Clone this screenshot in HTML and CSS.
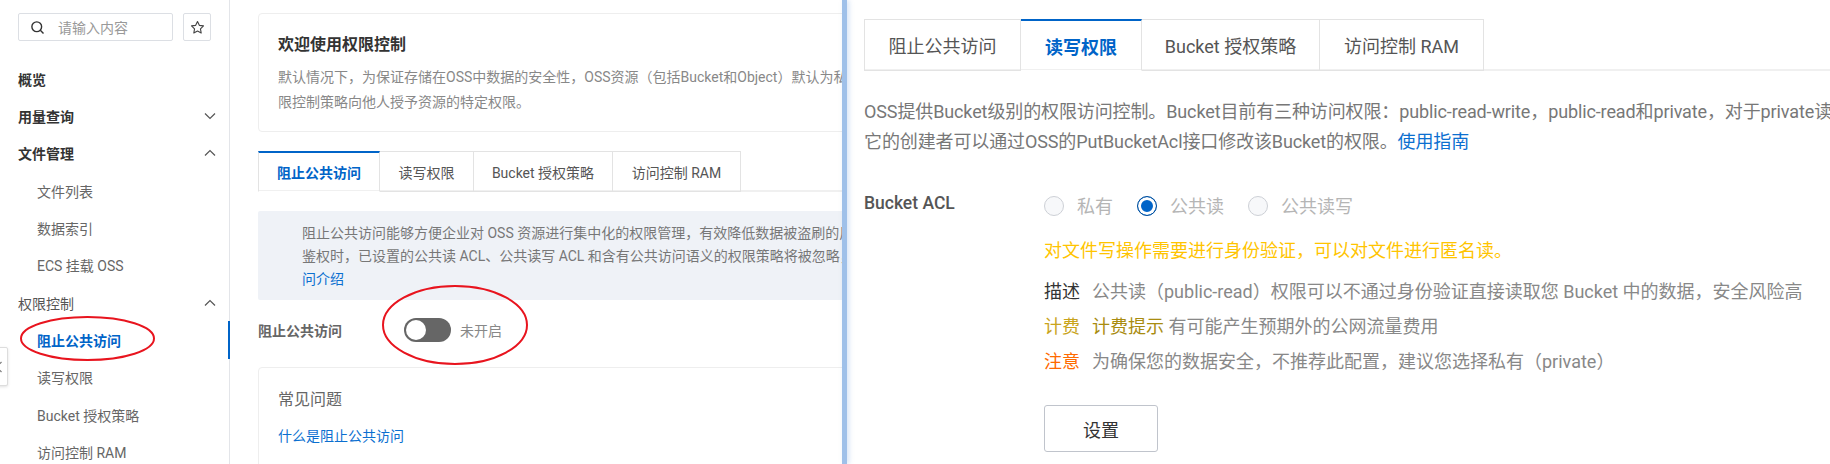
FILE: index.html
```html
<!DOCTYPE html>
<html lang="zh">
<head>
<meta charset="utf-8">
<title>权限控制</title>
<link rel="stylesheet" href="styles.css">
</head>
<body>
<div class="app">
  <section class="left">
    <aside class="sidebar">
      <div class="search-row">
        <div class="search">
          <svg class="search-icon" viewBox="0 0 16 16" width="15" height="15"><circle cx="7.2" cy="7.2" r="5.2"/><path d="M11 11l3.4 3.4"/></svg>
          <span>请输入内容</span>
        </div>
        <div class="star">
          <svg viewBox="0 0 16 16" width="15" height="15"><path d="M8 1.6l1.95 4.1 4.45.6-3.25 3.1.8 4.45L8 11.7l-3.95 2.15.8-4.45L1.6 6.3l4.45-.6z"/></svg>
        </div>
      </div>
      <nav class="menu">
        <div class="item head">概览</div>
        <div class="item head">用量查询<svg class="chev" viewBox="0 0 12 8" width="12" height="8"><path d="M1 1.5l5 5 5-5"/></svg></div>
        <div class="item head">文件管理<svg class="chev" viewBox="0 0 12 8" width="12" height="8"><path d="M1 6.5l5-5 5 5"/></svg></div>
        <div class="item sub">文件列表</div>
        <div class="item sub">数据索引</div>
        <div class="item sub">ECS 挂载 OSS</div>
        <div class="item group">权限控制<svg class="chev" viewBox="0 0 12 8" width="12" height="8"><path d="M1 6.5l5-5 5 5"/></svg></div>
        <div class="item sub active">阻止公共访问</div>
        <div class="item sub">读写权限</div>
        <div class="item sub">Bucket 授权策略</div>
        <div class="item sub">访问控制 RAM</div>
      </nav>
      <div class="collapse"><svg viewBox="0 0 8 12" width="8" height="12"><path d="M6.5 1l-5 5 5 5"/></svg></div>
    </aside>
    <main class="main">
      <div class="card intro">
        <h2>欢迎使用权限控制</h2>
        <p>默认情况下，为保证存储在OSS中数据的安全性，OSS资源（包括Bucket和Object）默认为私有权限，只有资源拥有者或者被授权的用户</p>
        <p>限控制策略向他人授予资源的特定权限。</p>
      </div>
      <div class="tabs small">
        <div class="tab active tab-a">阻止公共访问</div>
        <div class="tab tab-b">读写权限</div>
        <div class="tab tab-c">Bucket 授权策略</div>
        <div class="tab tab-d">访问控制 RAM</div>
      </div>
      <div class="notice">
        <p>阻止公共访问能够方便企业对 OSS 资源进行集中化的权限管理，有效降低数据被盗刷的风险和可能产生的</p>
        <p>鉴权时，已设置的公共读 ACL、公共读写 ACL 和含有公共访问语义的权限策略将被忽略，仅保留</p>
        <p class="link">问介绍</p>
      </div>
      <div class="switch-row">
        <div class="switch-label">阻止公共访问</div>
        <div class="switch"><span class="knob"></span></div>
        <div class="switch-text">未开启</div>
      </div>
      <div class="card faq">
        <h3>常见问题</h3>
        <p class="link">什么是阻止公共访问</p>
      </div>
    </main>
    <svg class="mark mark-menu" viewBox="0 0 135 45" width="135" height="45"><ellipse cx="67.5" cy="22.5" rx="66.5" ry="21.5"/></svg>
    <svg class="mark mark-switch" viewBox="0 0 146 80" width="146" height="80"><ellipse cx="73" cy="40" rx="72" ry="39"/></svg>
  </section>
  <div class="divider"></div>
  <section class="right">
    <div class="tabs large">
      <div class="tab tab-e">阻止公共访问</div>
      <div class="tab active tab-f">读写权限</div>
      <div class="tab tab-g">Bucket 授权策略</div>
      <div class="tab tab-h">访问控制 RAM</div>
    </div>
    <div class="para">
      <p>OSS提供Bucket级别的权限访问控制。Bucket目前有三种访问权限：public-read-write，public-read和private，对于private读写权限</p>
      <p>它的创建者可以通过OSS的PutBucketAcl接口修改该Bucket的权限。<span class="link">使用指南</span></p>
    </div>
    <div class="form">
      <div class="form-label">Bucket ACL</div>
      <div class="form-body">
        <div class="radios">
          <div class="radio-item"><span class="radio"></span>私有</div>
          <div class="radio-item"><span class="radio on"></span>公共读</div>
          <div class="radio-item"><span class="radio"></span>公共读写</div>
        </div>
        <div class="warn">对文件写操作需要进行身份验证，可以对文件进行匿名读。</div>
        <div class="info first"><span class="key desc">描述</span><span>公共读（public-read）权限可以不通过身份验证直接读取您 Bucket 中的数据，安全风险高</span></div>
        <div class="info"><span class="key fee">计费</span><span><span class="fee-tip">计费提示</span> 有可能产生预期外的公网流量费用</span></div>
        <div class="info"><span class="key note">注意</span><span>为确保您的数据安全，不推荐此配置，建议您选择私有（private）</span></div>
        <button class="btn" type="button">设置</button>
      </div>
    </div>
  </section>
</div>
</body>
</html>
```

FILE: styles.css
```css
* { box-sizing: border-box; }
html, body { margin: 0; padding: 0; background: #fff; }
body {
  width: 1830px;
  height: 464px;
  overflow: hidden;
  font-family: Roboto, "Noto Sans CJK SC", sans-serif;
  font-size: 14px;
  color: #555;
}
p, h2, h3 { margin: 0; }
.app { display: flex; width: 1830px; height: 464px; overflow: hidden; }

/* left screenshot */
.left { position: relative; display: flex; width: 842px; height: 464px; overflow: hidden; flex: none; }
.sidebar { position: relative; width: 230px; flex: none; padding-top: 13px; border-right: 1px solid #e3e5e9; }
.search-row { display: flex; gap: 10px; padding-left: 18px; }
.search {
  display: flex; align-items: center; gap: 13px;
  width: 155px; height: 28px; padding-left: 11px;
  border: 1px solid #dcdfe4; border-radius: 2px;
  color: #999; font-size: 14px;
}
.search-icon { fill: none; stroke: #333; stroke-width: 1.5; }
.star {
  display: flex; align-items: center; justify-content: center;
  width: 28px; height: 28px;
  border: 1px solid #dcdfe4; border-radius: 2px;
}
.star svg { fill: none; stroke: #444; stroke-width: 1.2; stroke-linejoin: round; }
.menu { margin-top: 19px; }
.item {
  display: flex; align-items: center; justify-content: space-between;
  height: 37.33px; padding-left: 18px; padding-right: 13px;
  font-size: 14px; color: #666; white-space: nowrap;
}
.item.head { font-weight: 700; color: #333; }
.item.group { color: #555; }
.item.sub { padding-left: 37px; }
.item.active { color: #0064c8; font-weight: 700; margin-right: -1px; border-right: 2px solid #0064c8; }
.chev { fill: none; stroke: #555; stroke-width: 1.2; }
.collapse {
  position: absolute; left: -14px; top: 347px;
  display: flex; align-items: center; justify-content: flex-end;
  width: 22px; height: 39px; padding-right: 4px;
  background: #fff; border: 1px solid #ddd; border-radius: 2px;
  box-shadow: 0 1px 3px rgba(0,0,0,.12);
}
.collapse svg { fill: none; stroke: #777; stroke-width: 1.2; }

.main { flex: none; width: 612px; padding: 13px 0 0 28px; overflow: hidden; }
.card { width: 800px; border: 1px solid #eeeeee; border-radius: 4px; background: #fff; }
.intro { height: 119px; padding: 19px 0 0 19px; }
.intro h2 { font-size: 16px; line-height: 24px; font-weight: 700; color: #333; margin-bottom: 8px; }
.intro p { font-size: 14px; line-height: 25px; color: #888; white-space: nowrap; }

.tabs { display: flex; border-bottom: 2px solid #f0f0f0; white-space: nowrap; }
.tab {
  display: flex; align-items: center; justify-content: center; flex: none;
  margin-bottom: -2px; border: 1px solid #e3e3e3; border-left: 0; color: #555;
}
.tab.active { color: #0064c8; font-weight: 700; border-top: 2px solid #0064c8; border-bottom-color: #fff; border-left: 1px solid #e3e3e3; }
.tabs.small { width: 800px; height: 41px; margin-top: 19px; font-size: 14px; }
.tab-a { width: 122px; } .tab-b { width: 94px; } .tab-c { width: 139px; } .tab-d { width: 128px; }

.notice { width: 800px; height: 89px; margin-top: 19px; padding: 11px 0 0 44px; background: #eff2f7; border-radius: 2px; }
.notice p { font-size: 14px; line-height: 23px; color: #777; white-space: nowrap; }
.notice .link, .link { color: #0b6fd0; }

.switch-row { display: flex; align-items: center; height: 24px; margin-top: 18px; }
.switch-label { width: 146px; font-weight: 700; color: #666; }
.switch { width: 47px; height: 24px; padding: 2px; border-radius: 12px; background: #666; }
.knob { display: block; width: 20px; height: 20px; border-radius: 50%; background: #fff; }
.switch-text { margin-left: 9px; color: #888; }

.faq { height: 120px; margin-top: 25px; padding: 20px 0 0 19px; }
.faq h3 { font-size: 16px; line-height: 24px; font-weight: 400; color: #666; }
.faq p { margin-top: 13px; font-size: 14px; line-height: 22px; }

.mark { position: absolute; fill: none; stroke: #e8141e; stroke-width: 2; }
.mark-menu { left: 20px; top: 316px; }
.mark-switch { left: 382px; top: 285px; }

/* divider */
.divider { flex: none; width: 5px; height: 464px; background: #9fc0e9; box-shadow: 2px 0 5px rgba(130,170,225,.35); position: relative; z-index: 1; }

/* right screenshot */
.right { flex: 1; min-width: 0; height: 464px; padding: 19px 0 0 17px; overflow: hidden; }
.tabs.large { height: 52px; font-size: 18px; }
.tab-e { width: 157px; border-left: 1px solid #e3e3e3; }
.tab-f { width: 121px; border-left: 0 !important; }
.tab-g { width: 178px; } .tab-h { width: 164px; }
.para { margin-top: 26px; }
.para p { font-size: 18px; line-height: 30px; letter-spacing: -0.12px; color: #777; white-space: nowrap; }
.form { display: flex; margin-top: 34px; }
.form-label { width: 180px; flex: none; font-size: 17.5px; line-height: 24px; font-weight: 500; color: #555; }
.form-body { font-size: 18px; white-space: nowrap; }
.radios { display: flex; height: 32px; align-items: center; }
.radio-item { display: flex; align-items: center; gap: 13px; margin-right: 24px; color: #b5b5b5; line-height: 30px; }
.radio { display: block; width: 20px; height: 20px; margin-top: -2px; border: 1px solid #cdd0d6; border-radius: 50%; background: #f7f8fa; }
.radio.on { border: 1px solid #004e9c; background: #0064c8; box-shadow: inset 0 0 0 3px #fff; }
.warn { margin-top: 13px; line-height: 30px; color: #ffc400; }
.info { display: flex; gap: 12px; line-height: 35px; color: #888; }
.info.first { margin-top: 8px; }
.key.desc { color: #333; }
.key.fee { color: #c9a41c; }
.fee-tip { color: #a98c10; }
.key.note { color: #ff6a00; }
.btn {
  display: block; width: 114px; height: 47px; margin-top: 26px; padding: 0;
  background: #fff; border: 1px solid #c0c4cc; border-radius: 3px;
  font: inherit; color: #333;
}
```
